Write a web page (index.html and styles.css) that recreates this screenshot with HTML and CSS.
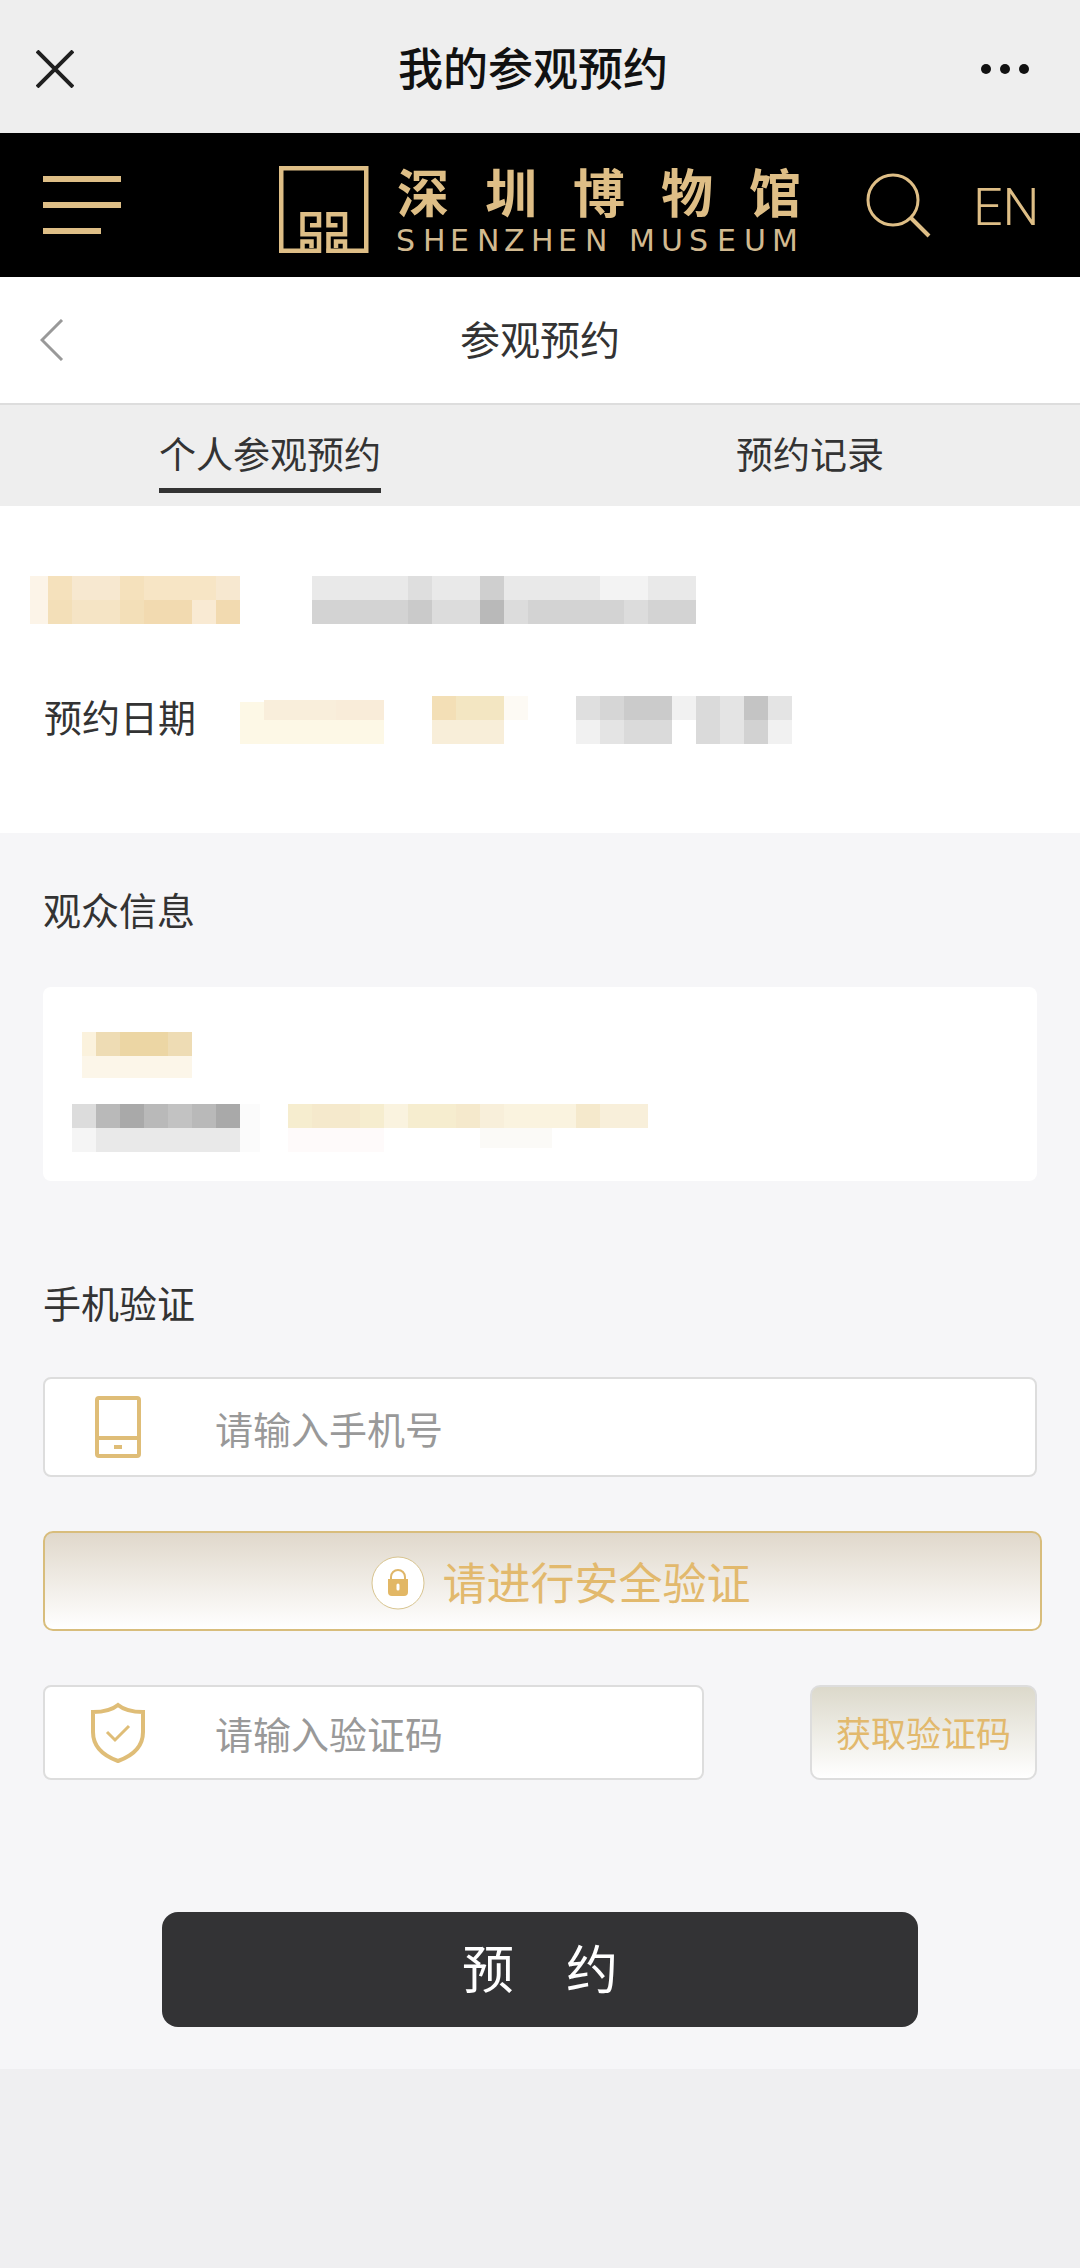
FILE: index.html
```
<!DOCTYPE html>
<html lang="zh-CN">
<head>
  <meta charset="UTF-8">
  <meta name="viewport" content="width=device-width, initial-scale=1.0">
  <title>我的参观预约</title>
  <link rel="stylesheet" href="styles.css">
</head>
<body>

<div class="app-bar">
  <button type="button" class="icon-btn" aria-label="关闭">
    <svg width="38" height="38" viewBox="0 0 38 38" fill="none" stroke="#1f1f1f" stroke-width="4"><path d="M1 1L37 37M37 1L1 37"/></svg>
  </button>
  <h1 class="app-title">我的参观预约</h1>
  <button type="button" class="icon-btn" aria-label="更多">
    <svg width="50" height="12" viewBox="0 0 50 12" fill="#111"><circle cx="6" cy="6" r="5"/><circle cx="25" cy="6" r="5"/><circle cx="44" cy="6" r="5"/></svg>
  </button>
</div>

<header class="site-header">
  <button type="button" class="icon-btn" aria-label="菜单">
    <svg width="78" height="58" viewBox="0 0 78 58" fill="#debe86"><path d="M0 0h78v6H0zM0 26h78v6H0zM0 52h58v6H0z"/></svg>
  </button>
  <a href="#" class="logo">
    <svg width="526" height="120" viewBox="0 -21 526 120">
      <g fill="none" stroke="#debe86" stroke-width="4.5">
        <path d="M42 84.750H2.250V2.250H87.250V84.750H47.500"/>
        <path d="M31 59.250H40V48.250H23.500V68.250H40V87M23.500 87V75.500H32.500V82"/>
        <path d="M58.500 59.250H49.500V48.250H66V68.250H49.500V87M66 87V75.500H57V82"/>
      </g>
      <text class="logo-cn" x="118 206 294 382 470" y="47">深圳博物馆</text>
      <text class="logo-en" x="117 144 171 198 225 252 279 306 334 350 382 410 438 465 493" y="85">SHENZHEN MUSEUM</text>
    </svg>
  </a>
  <div class="header-tools">
    <button type="button" class="icon-btn" aria-label="搜索">
      <svg width="66" height="66" viewBox="0 0 66 66" fill="none" stroke="#debe86" stroke-width="3"><circle cx="28" cy="28" r="25"/><path d="M46 46L64 64" stroke-width="4"/></svg>
    </button>
    <a href="#" class="lang">EN</a>
  </div>
</header>

<div class="page-head">
  <button type="button" class="icon-btn" aria-label="返回">
    <svg width="24" height="42" viewBox="0 0 24 42" fill="none" stroke="#999" stroke-width="3"><path d="M22 1L2 21L22 41"/></svg>
  </button>
  <h2 class="page-title">参观预约</h2>
</div>

<nav class="tabs">
  <a href="#" class="tab"><span class="tab-text active">个人参观预约</span></a>
  <a href="#" class="tab"><span class="tab-text">预约记录</span></a>
</nav>

<section class="booking">
  <!-- hidden personal data -->
  <svg class="mosaic" width="676" height="48" viewBox="0 0 676 48">
    <path fill="#fcf4e8" d="M-14 0h18v48h-18z"/>
    <path fill="#f5e1bc" d="M4 0h24v24H4zM76 0h24v24H76z"/>
    <path fill="#f7e8d0" d="M28 0h48v24H28zM172 0h24v24H172z"/>
    <path fill="#f7e5c5" d="M100 0h72v24H100z"/>
    <path fill="#f3dfb8" d="M4 24h24v24H4zM76 24h24v24H76z"/>
    <path fill="#f5e4c5" d="M28 24h48v24H28z"/>
    <path fill="#f2dab0" d="M100 24h48v24H100zM172 24h24v24H172z"/>
    <path fill="#f9ead3" d="M148 24h24v24H148z"/>
    <path fill="#e9e9e9" d="M268 0h384v24H268z"/>
    <path fill="#dedede" d="M364 0h24v24H364z"/>
    <path fill="#cfcfcf" d="M436 0h24v24H436z"/>
    <path fill="#f3f3f3" d="M556 0h48v24H556z"/>
    <path fill="#d3d3d3" d="M268 24h384v24H268z"/>
    <path fill="#cacaca" d="M364 24h24v24H364z"/>
    <path fill="#b9b9b9" d="M436 24h24v24H436z"/>
    <path fill="#dcdcdc" d="M388 24h48v24H388zM460 24h24v24H460zM580 24h24v24H580z"/>
  </svg>
  <div class="booking-date">
    <h3 class="label">预约日期</h3>
    <svg class="mosaic" width="552" height="48" viewBox="0 0 552 48">
      <path fill="#fdf8e6" d="M0 6h24v18H0zM0 24h144v24H0z"/>
      <path fill="#f9eedb" d="M24 4h72v20H24z"/>
      <path fill="#f9ecd9" d="M96 4h48v20H96z"/>
      <path fill="#f3dfb6" d="M192 0h24v24H192z"/>
      <path fill="#f3e6c2" d="M216 0h48v24H216z"/>
      <path fill="#f8eed9" d="M192 24h72v24H192z"/>
      <path fill="#fdfaf4" d="M264 0h24v24H264z"/>
      <path fill="#dfdfdf" d="M336 0h24v24H336zM456 0h24v24H456z"/>
      <path fill="#d6d6d6" d="M360 0h24v24H360z"/>
      <path fill="#cbcbcb" d="M384 0h48v24H384z"/>
      <path fill="#f1f1f1" d="M432 0h48v24H432zM336 24h24v24H336zM528 24h24v24H528z"/>
      <path fill="#e4e4e4" d="M480 0h24v48H480zM528 0h24v24H528zM360 24h24v24H360z"/>
      <path fill="#dadada" d="M384 24h48v24H384zM456 0h24v48H456z"/>
      <path fill="#c4c4c4" d="M504 0h24v24H504z"/>
      <path fill="#d2d2d2" d="M504 24h24v24H504z"/>
    </svg>
  </div>
</section>

<main class="content">
  <h3 class="label">观众信息</h3>
  <div class="visitor-card">
    <svg class="mosaic" width="600" height="120" viewBox="0 0 600 120">
      <path fill="#fbf2dd" d="M10 0h14v24H10z"/>
      <path fill="#eedcb4" d="M24 0h96v24H24z"/>
      <path fill="#ecd6a4" d="M48 0h48v24H48z"/>
      <path fill="#fcf6e9" d="M10 24h110v22H10z"/>
      <path fill="#dcdcdc" d="M0 72h24v24H0z"/>
      <path fill="#b9b9b9" d="M24 72h144v24H24z"/>
      <path fill="#a9a9a9" d="M48 72h24v24H48zM144 72h24v24h-24z"/>
      <path fill="#c2c2c2" d="M96 72h24v24H96z"/>
      <path fill="#f5f5f5" d="M0 96h24v24H0z"/>
      <path fill="#e9e9e9" d="M24 96h144v24H24z"/>
      <path fill="#fbfbfb" d="M168 72h20v48H168z"/>
      <path fill="#f6edcf" d="M216 72h96v24H216zM336 72h48v24H336z"/>
      <path fill="#faf3df" d="M312 72h24v24H312zM432 72h72v24H432z"/>
      <path fill="#f5e9cc" d="M240 72h48v24H240zM384 72h24v24H384zM504 72h24v24H504z"/>
      <path fill="#f8efda" d="M408 72h24v24H408zM528 72h48v24H528z"/>
      <path fill="#fefafa" d="M216 96h96v24H216z"/>
      <path fill="#fbfaf7" d="M408 96h72v20H408z"/>
    </svg>
  </div>

  <form>
    <h3 class="label">手机验证</h3>
    <div class="field field-phone">
      <label for="phone" aria-label="手机号">
        <svg width="54" height="62" viewBox="0 0 54 62" fill="none" stroke="#dfbd77" stroke-width="4"><rect x="6" y="2" width="42" height="58" rx="2"/><path d="M6 42h42M23 51h8"/></svg>
      </label>
      <input type="tel" id="phone" placeholder="请输入手机号">
    </div>

    <button type="button" class="verify-btn">
      <svg class="lock" width="54" height="54" viewBox="0 0 54 54">
        <circle cx="27" cy="27" r="26" fill="#fff" stroke="#d8c48f"/>
        <path d="M20 25v-4a7 7 0 0 1 14 0v4" fill="none" stroke="#dfb668" stroke-width="2"/>
        <path d="M17 23h20v13a4 4 0 0 1-4 4H21a4 4 0 0 1-4-4z" fill="#e2b765"/>
        <path d="M27 29v4" stroke="#fff" stroke-width="3" stroke-linecap="round"/>
      </svg>
      <span>请进行安全验证</span>
    </button>

    <div class="code-row">
      <div class="field field-code">
        <label for="code" aria-label="验证码">
          <svg width="54" height="62" viewBox="0 0 54 62" fill="none" stroke="#dfbd77" stroke-width="4"><path d="M27 3C21 8 12 10 2 10V30C2 45 13 54 27 59C41 54 52 45 52 30V10C42 10 33 8 27 3Z"/><path d="M16 30L24 38L38 24" stroke-width="3"/></svg>
        </label>
        <input type="text" id="code" placeholder="请输入验证码">
      </div>
      <button type="button" class="code-btn">获取验证码</button>
    </div>

    <button type="submit" class="submit-btn">预　约</button>
  </form>
</main>

</body>
</html>
```
FILE: styles.css
```
* {
  box-sizing: border-box;
}

body {
  margin: 0;
  font-family: "Noto Sans CJK SC", sans-serif;
  color: #333;
  background: #efeff1;
}

h1, h2, h3 {
  margin: 0;
  font-weight: 400;
}

a {
  color: inherit;
  text-decoration: none;
}

svg {
  display: block;
}

button, input {
  font-family: inherit;
  color: inherit;
}

.icon-btn {
  padding: 0;
  border: 0;
  background: none;
}

.app-bar {
  display: flex;
  align-items: center;
  justify-content: space-between;
  height: 133px;
  padding: 4px 50px 0 36px;
  background: #eee;
}

.app-title {
  padding: 0 0 4px 12px;
  font-size: 45px;
  line-height: 60px;
  font-weight: 500;
  color: #111;
}

.site-header {
  display: flex;
  align-items: center;
  height: 144px;
  padding: 0 40px 0 43px;
  background: #000;
  color: #debe86;
}

.logo {
  margin: 0 60px 0 auto;
}

.logo svg {
  overflow: visible;
}

.logo-cn {
  font-size: 52px;
  font-weight: 700;
  fill: #debe86;
}

.logo-en {
  font-family: "DejaVu Sans", sans-serif;
  font-size: 30px;
  fill: #d2ba90;
}

.header-tools {
  display: flex;
  align-items: center;
  gap: 42px;
}

.lang {
  width: 67px;
  padding-top: 6px;
  font-family: Roboto, sans-serif;
  font-size: 52px;
  line-height: 60px;
  font-weight: 300;
}

.page-head {
  display: grid;
  grid-template-columns: 60px 1fr 60px;
  align-items: center;
  height: 128px;
  padding: 0 40px;
  border-bottom: 2px solid #ddd;
  background: #fff;
}

.page-title {
  padding-bottom: 4px;
  font-size: 40px;
  line-height: 60px;
  text-align: center;
}

.tabs {
  display: flex;
  height: 101px;
  background: #eee;
}

.tab {
  flex: 1;
  padding-top: 20px;
  text-align: center;
}

.tab-text {
  display: inline-block;
  height: 68px;
  font-size: 37px;
  line-height: 56px;
}

.active {
  border-bottom: 5px solid #333;
}

.booking {
  padding: 70px 44px 89px;
  background: #fff;
}

.booking-date {
  display: flex;
  gap: 44px;
  margin-top: 72px;
}

.label {
  font-size: 38px;
  line-height: 40px;
}

.mosaic {
  overflow: visible;
  shape-rendering: crispEdges;
}

.content {
  padding: 56px 43px 42px;
  background: #f6f6f8;
}

.visitor-card {
  margin: 58px 0 101px;
  padding: 45px 29px 29px;
  border-radius: 8px;
  background: #fff;
}

.field {
  display: flex;
  align-items: center;
  border: 2px solid #ddd;
  border-radius: 8px;
  background: #fff;
}

.field label {
  padding: 0 70px 0 46px;
}

.field input {
  flex: 1;
  min-width: 0;
  height: 60px;
  padding: 0;
  border: 0;
  outline: 0;
  background: none;
  font-size: 38px;
}

.field input::placeholder {
  color: #999;
}

.field-phone {
  height: 100px;
  margin: 55px 0 54px;
}

.field-code {
  flex: 1;
  height: 95px;
}

/* a little wider than the fields */
.verify-btn {
  display: flex;
  align-items: center;
  justify-content: center;
  gap: 18px;
  width: calc(100% + 5px);
  height: 100px;
  padding: 0 0 0 36px;
  border: 2px solid #d8bd7c;
  border-radius: 10px;
  background: linear-gradient(#e0d8cb, #fff);
  font-size: 44px;
  color: #e2b96d;
}

.lock {
  margin-top: 4px;
}

.code-row {
  display: flex;
  gap: 106px;
  margin-top: 54px;
}

.code-btn {
  width: 227px;
  height: 95px;
  padding: 0 0 2px;
  border: 2px solid #ddd;
  border-radius: 10px;
  background: linear-gradient(#dcd9cb, #fff);
  font-size: 35px;
  color: #e2b96d;
}

.submit-btn {
  display: block;
  width: 76%;
  height: 115px;
  margin: 132px auto 0;
  padding: 0 0 6px;
  border: 0;
  border-radius: 16px;
  background: #333335;
  font-size: 52px;
  color: #fff;
}
```
